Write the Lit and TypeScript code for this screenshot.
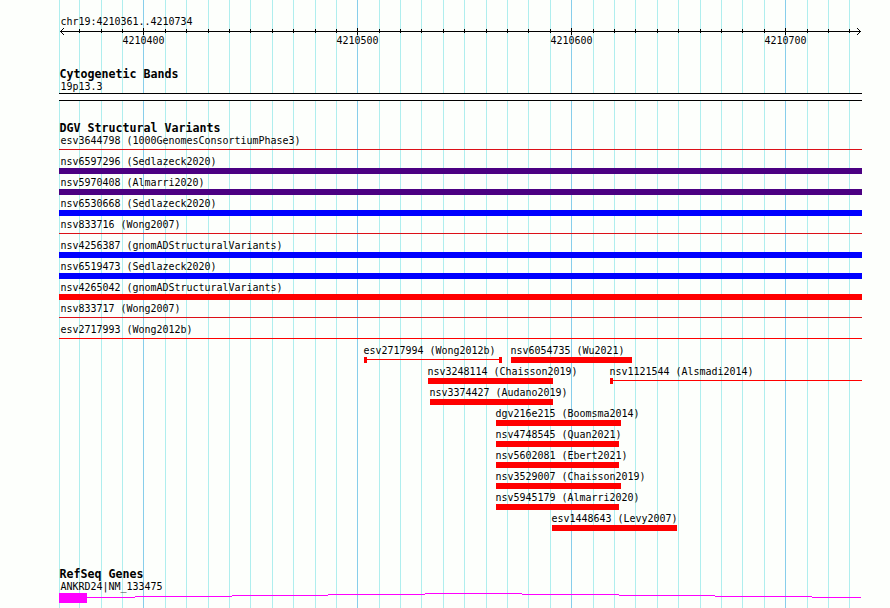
import { LitElement, html, svg, css } from "lit";
import { customElement, property } from "lit/decorators.js";

type Shape = "bar" | "line" | "range" | "open";
interface Feature {
  label: string;
  start: number;
  end: number;
  shape: Shape;
  color: string;
}

const LEFT = 59;
const RIGHT = 862;
const WIDTH = RIGHT - LEFT;

const RED = "#ff0000";
const CRIMSON = "#dc1018";
const BLUE = "#0000ff";
const INDIGO = "#4b0082";

const MINOR = [
  59, 79, 101, 122, 165, 186, 208, 229, 250, 272, 293, 315, 336, 379, 400, 421,
  443, 464, 486, 507, 528, 550, 593, 614, 635, 657, 678, 700, 721, 742, 764,
  807, 828, 849,
];
const MAJOR = [
  { x: 143, text: "4210400" },
  { x: 357, text: "4210500" },
  { x: 571, text: "4210600" },
  { x: 785, text: "4210700" },
];

const full = (label: string, shape: Shape, color: string): Feature[] => [
  { label, start: LEFT, end: RIGHT, shape, color },
];
const at = (label: string, start: number, end: number, shape: Shape = "bar"): Feature => ({
  label, start, end, shape, color: RED,
});

const ROWS: Feature[][] = [
  full("esv3644798 (1000GenomesConsortiumPhase3)", "line", CRIMSON),
  full("nsv6597296 (Sedlazeck2020)", "bar", INDIGO),
  full("nsv5970408 (Almarri2020)", "bar", INDIGO),
  full("nsv6530668 (Sedlazeck2020)", "bar", BLUE),
  full("nsv833716 (Wong2007)", "line", CRIMSON),
  full("nsv4256387 (gnomADStructuralVariants)", "bar", BLUE),
  full("nsv6519473 (Sedlazeck2020)", "bar", BLUE),
  full("nsv4265042 (gnomADStructuralVariants)", "bar", RED),
  full("nsv833717 (Wong2007)", "line", CRIMSON),
  full("esv2717993 (Wong2012b)", "line", RED),
  [at("esv2717994 (Wong2012b)", 364, 502, "range"), at("nsv6054735 (Wu2021)", 511, 632)],
  [at("nsv3248114 (Chaisson2019)", 428, 553), at("nsv1121544 (Alsmadi2014)", 610, RIGHT, "open")],
  [at("nsv3374427 (Audano2019)", 430, 553)],
  [at("dgv216e215 (Boomsma2014)", 496, 621)],
  [at("nsv4748545 (Quan2021)", 496, 619)],
  [at("nsv5602081 (Ebert2021)", 496, 619)],
  [at("nsv3529007 (Chaisson2019)", 496, 621)],
  [at("nsv5945179 (Almarri2020)", 496, 619)],
  [at("esv1448643 (Levy2007)", 552, 677)],
];

const INTRON: [number, number, number][] = [
  [87, 135, 597], [135, 232, 596], [232, 328, 595], [328, 425, 594],
  [425, 522, 593], [522, 619, 594], [619, 715, 595], [715, 812, 596],
  [812, 861, 597],
];

const textStyles = css`
  text {
    font-family: "DejaVu Sans Mono", "Liberation Mono", monospace;
    font-size: 11px;
    fill: #000;
    white-space: pre;
  }
  .title {
    font-size: 11.5px;
    font-weight: bold;
  }
  svg {
    display: block;
    overflow: visible;
    shape-rendering: crispEdges;
  }
`;

// Fixed-pitch label: 6px per character, or 7px for section titles.
const label = (s: string, x: number, baseline: number, bold = false) => svg`
  <text class=${bold ? "title" : "label"} x=${x + 0.5} y=${baseline}
    textLength=${s.length * (bold ? 7 : 6)} lengthAdjust="spacingAndGlyphs">${s}</text>`;

@customElement("grid-lines")
class GridLines extends LitElement {
  static styles = css`
    :host { display: block; }
    svg { display: block; shape-rendering: crispEdges; }
    .minor { fill: #afeeee; }
    .major { fill: #87ceeb; }
  `;
  render() {
    return html`<svg width="890" height="608">
      ${MINOR.map((x) => svg`<rect class="minor" x=${x} y="0" width="1" height="608"></rect>`)}
      ${MAJOR.map((m) => svg`<rect class="major" x=${m.x} y="0" width="1" height="608"></rect>`)}
    </svg>`;
  }
}

@customElement("scale-ruler")
class ScaleRuler extends LitElement {
  static styles = [textStyles, css`:host { display: block; }`];
  render() {
    return html`<svg width=${WIDTH} height="50" viewBox="59 10 803 50">
      ${label("chr19:4210361..4210734", 60, 25)}
      <rect x="60" y="31" width="801" height="1"></rect>
      ${[1, 2, 3].map((d) => [60 + d, 860 - d].map((x) => svg`
        <rect x=${x} y=${31 - d} width="1" height="1"></rect>
        <rect x=${x} y=${31 + d} width="1" height="1"></rect>`))}
      ${MINOR.filter((x) => x > LEFT).map((x) => svg`<rect x=${x} y="29" width="1" height="4"></rect>`)}
      ${MAJOR.map((m) => svg`<rect x=${m.x} y="28" width="1" height="7"></rect>${label(m.text, m.x - 21, 44)}`)}
    </svg>`;
  }
}

@customElement("cytoband-track")
class CytobandTrack extends LitElement {
  static styles = [textStyles, css`
    :host { display: block; }
    .band { fill: #fff; }
  `];
  render() {
    return html`<svg width=${WIDTH} height="58" viewBox="59 60 803 58">
      ${label("Cytogenetic Bands", 59, 78, true)}
      ${label("19p13.3", 60, 90)}
      <rect class="band" x="59" y="93" width="803" height="8"></rect>
      <rect x="59" y="93" width="803" height="1"></rect>
      <rect x="59" y="100" width="803" height="1"></rect>
    </svg>`;
  }
}

@customElement("variant-row")
class VariantRow extends LitElement {
  static styles = [textStyles, css`:host { display: block; height: 21px; }`];
  @property({ attribute: false }) features: Feature[] = [];

  private glyph(f: Feature) {
    const w = f.end - f.start;
    if (f.shape === "bar")
      return svg`<rect x=${f.start} y="13" width=${w} height="6" fill=${f.color}></rect>`;
    return svg`
      <rect x=${f.start} y="15" width=${w} height="1" fill=${f.color}></rect>
      ${f.shape !== "line" ? svg`<rect x=${f.start} y="13" width="3" height="6" fill=${f.color}></rect>` : null}
      ${f.shape === "range" ? svg`<rect x=${f.end - 3} y="13" width="3" height="6" fill=${f.color}></rect>` : null}`;
  }

  render() {
    return html`<svg width=${WIDTH} height="21" viewBox="59 0 803 21">
      ${this.features.map((f) => svg`${this.glyph(f)}${label(f.label, f.start === LEFT ? 60 : f.start - 1, 10)}`)}
    </svg>`;
  }
}

@customElement("gene-track")
class GeneTrack extends LitElement {
  static styles = [textStyles, css`
    :host { display: block; }
    .gene { fill: #ff00ff; }
  `];
  render() {
    return html`<svg width=${WIDTH} height="44" viewBox="59 564 803 44">
      ${label("RefSeq Genes", 59, 578, true)}
      ${label("ANKRD24|NM_133475", 60, 590)}
      <rect class="gene" x="59" y="593" width="28" height="10"></rect>
      ${INTRON.map(([a, b, y]) => svg`<rect class="gene" x=${a} y=${y} width=${b - a} height="1"></rect>`)}
    </svg>`;
  }
}

@customElement("app-root")
class AppRoot extends LitElement {
  static styles = [textStyles, css`
    :host {
      display: block;
      position: relative;
      width: 890px;
      height: 608px;
      overflow: hidden;
      background: #fdfffc;
    }
    grid-lines { position: absolute; inset: 0; }
    main {
      position: relative;
      box-sizing: border-box;
      height: 608px;
      padding: 10px 28px 0 59px;
      display: flex;
      flex-direction: column;
    }
    .variants { flex: 1; }
  `];
  render() {
    return html`
      <grid-lines></grid-lines>
      <main>
        <scale-ruler></scale-ruler>
        <cytoband-track></cytoband-track>
        <section class="variants">
          <svg width=${WIDTH} height="16" viewBox="59 118 803 16">
            ${label("DGV Structural Variants", 59, 132, true)}
          </svg>
          ${ROWS.map((r) => html`<variant-row .features=${r}></variant-row>`)}
        </section>
        <gene-track></gene-track>
      </main>`;
  }
}
